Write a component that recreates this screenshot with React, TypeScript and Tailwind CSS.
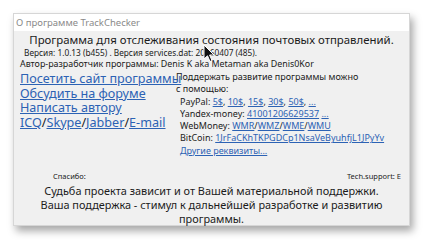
import React from 'react';

const Link: React.FC<{ children: React.ReactNode }> = ({ children }) => (
  <span className="text-[#2c62b4] underline underline-offset-1">{children}</span>
);

const Cursor: React.FC = () => (
  <svg width="12" height="19" viewBox="0 0 12 19" className="absolute left-[189px] top-[30px]">
    <path d="M1 1 L1 15 L4.5 11.8 L7 17.5 L9 16.6 L6.6 11 L11 11 Z" fill="#111" stroke="#fff" strokeWidth="1" />
  </svg>
);

const App: React.FC = () => {
  return (
    <div className="w-[424px] h-[240px] bg-white pt-[13px] pl-[13px] font-['Noto_Sans',sans-serif] text-[#1b1b1b]">
      <div className="relative w-[397px] h-[213px] bg-[#f0f0f0] border border-[#d6d6d6] shadow-[3px_5px_8px_rgba(0,0,0,0.35)] flex flex-col">
        <div className="h-[17px] bg-white px-[2px] text-[9.5px] leading-[17px] text-[#8a8a8a]">
          О программе TrackChecker
        </div>
        <div className="text-center text-[11.4px] leading-[15px] mt-[1px] whitespace-nowrap">
          Программа для отслеживания состояния почтовых отправлений.
        </div>
        <div className="pl-[10px] text-[8.3px] leading-[11px] whitespace-nowrap">
          Версия: 1.0.13 (b455) . Версия services.dat: 20160407 (485).
        </div>
        <div className="pl-[6px] text-[8.9px] leading-[12px] whitespace-nowrap">
          Автор-разработчик программы: Denis K aka Metaman aka Denis0Kor
        </div>
        <div className="flex pl-[6px] mt-[1px]">
          <div className="w-[156px] text-[12.6px] leading-[14.7px] mt-[1px] text-[#2c62b4] whitespace-nowrap">
            <div><Link>Посетить сайт программы</Link></div>
            <div><Link>Обсудить на форуме</Link></div>
            <div><Link>Написать автору</Link></div>
            <div>
              <Link>ICQ</Link><span className="text-[#1b1b1b]">/</span><Link>Skype</Link><span className="text-[#1b1b1b]">/</span><Link>Jabber</Link><span className="text-[#1b1b1b]">/</span><Link>E-mail</Link>
            </div>
          </div>
          <div className="text-[9px] leading-[12.3px] whitespace-nowrap">
            <div>Поддержать развитие программы можно</div>
            <div>с помощью:</div>
            <div className="pl-[4px]">
              <div>PayPal: <Link>5$</Link>, <Link>10$</Link>, <Link>15$</Link>, <Link>30$</Link>, <Link>50$</Link>, <Link>...</Link></div>
              <div>Yandex-money: <Link>41001206629537</Link> <Link>...</Link></div>
              <div>WebMoney: <Link>WMR</Link>/<Link>WMZ</Link>/<Link>WME</Link>/<Link>WMU</Link></div>
              <div>BitCoin: <Link>1JrFaCKhTKPGDCp1NsaVeByuhfjL1JPyYv</Link></div>
              <div><Link>Другие реквизиты...</Link></div>
            </div>
          </div>
        </div>
        <div className="flex justify-between items-end mt-[14px] pl-[39px] pr-[8px] text-[7.5px] leading-[10px] whitespace-nowrap">
          <span>Спасибо:</span>
          <span>Tech.support: E</span>
        </div>
        <div className="text-center text-[10.9px] leading-[14px] mt-[3px]">
          <div>Судьба проекта зависит и от Вашей материальной поддержки.</div>
          <div>Ваша поддержка - стимул к дальнейшей разработке и развитию</div>
          <div>программы.</div>
        </div>
        <Cursor />
      </div>
    </div>
  );
};

export default App;
